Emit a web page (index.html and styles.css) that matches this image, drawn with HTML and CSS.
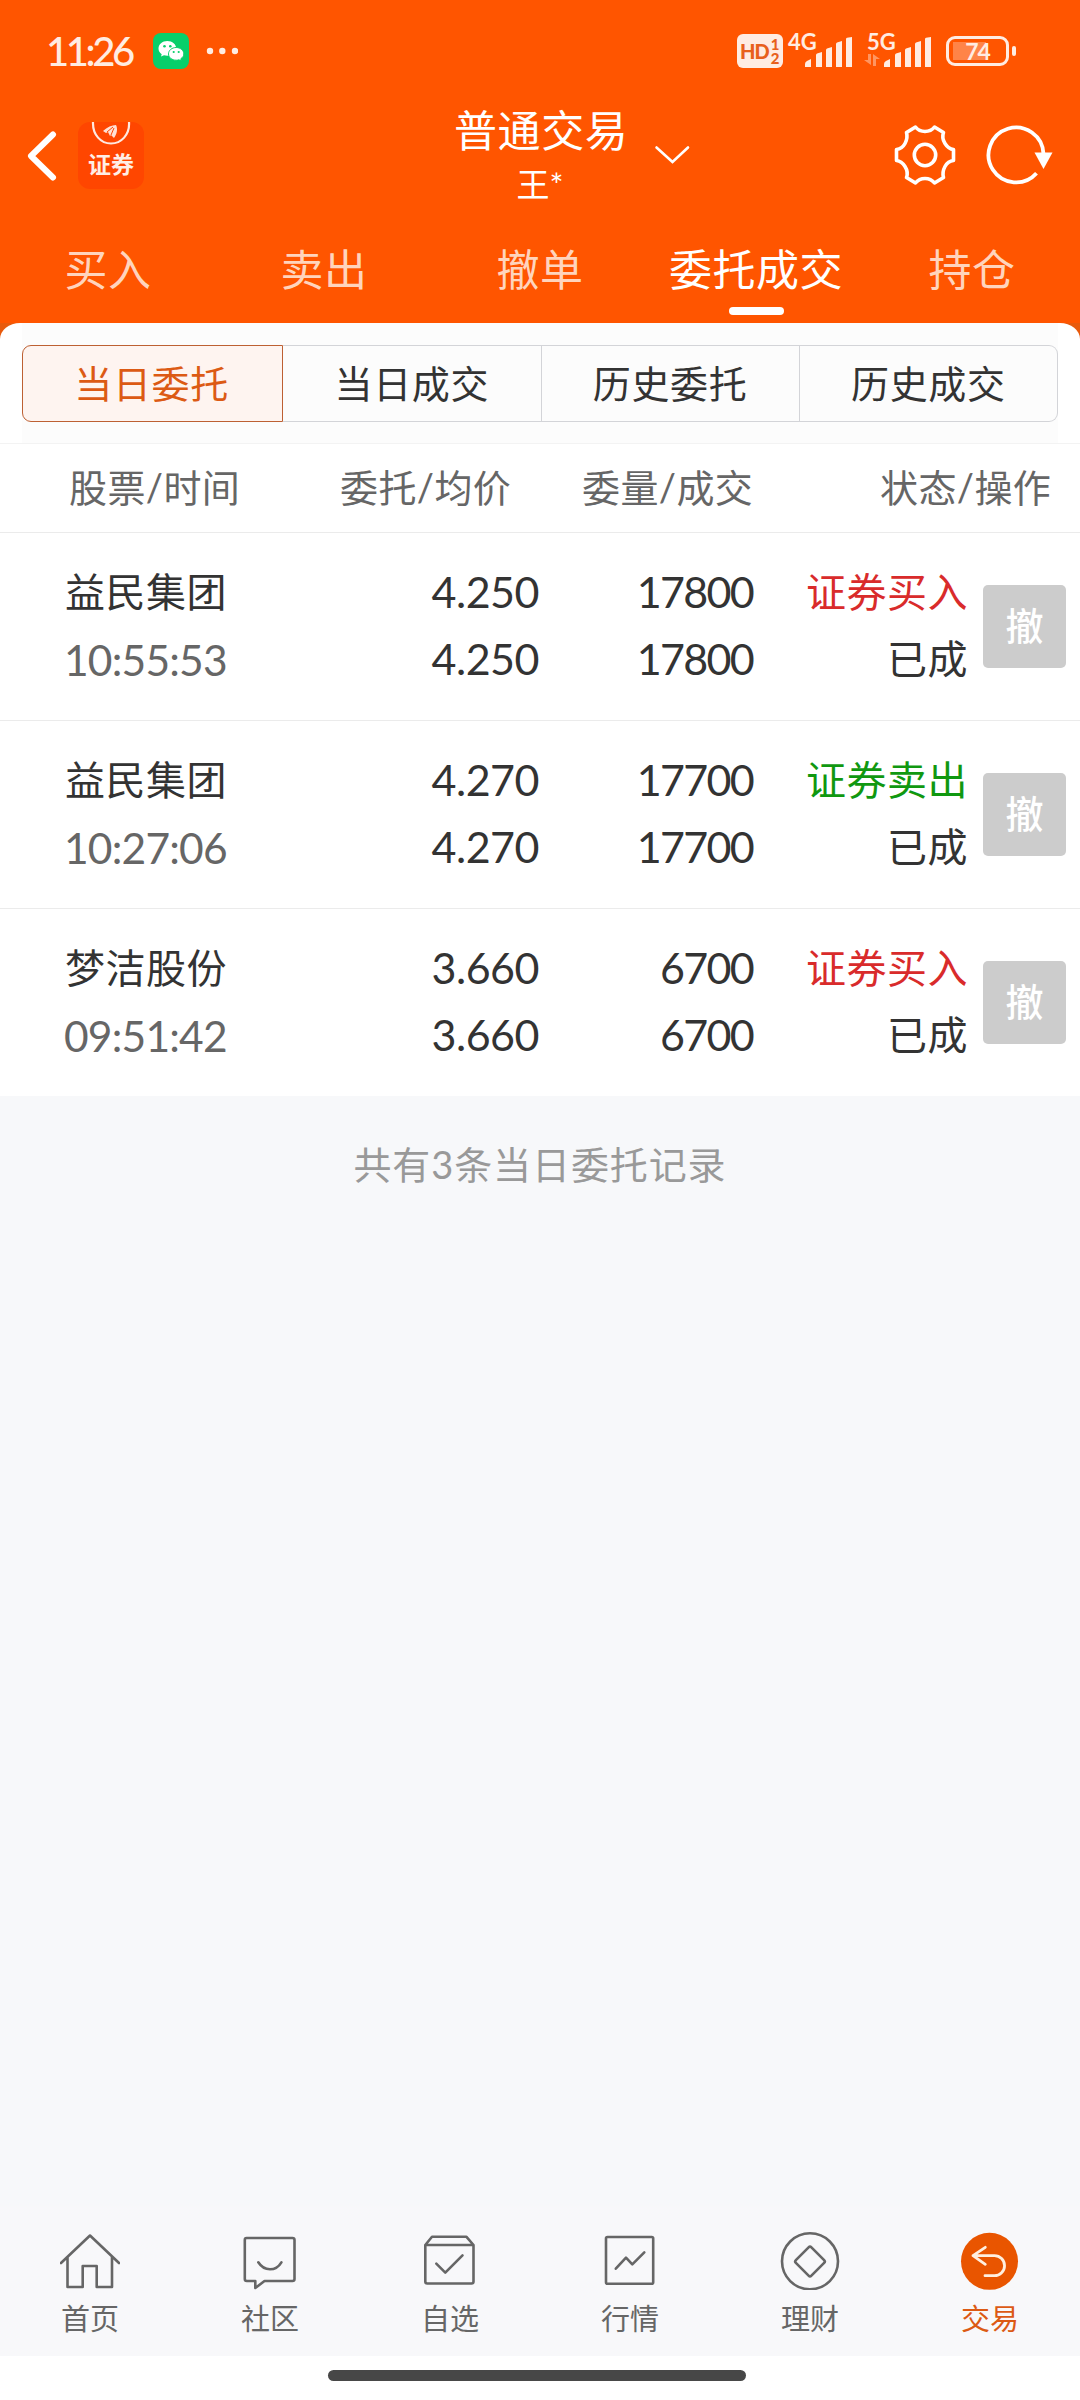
FILE: index.html
```html
<!DOCTYPE html>
<html lang="zh-CN">
<head>
    <meta charset="UTF-8">
    <meta name="viewport" content="width=device-width, initial-scale=1.0">
    <title>普通交易</title>
    <link rel="stylesheet" href="styles.css">
</head>
<body>
    <div class="app">
        <header class="top">
            <div class="status-bar">
                <span class="clock">11:26</span>
                <svg class="wechat" width="36" height="36" viewBox="0 0 36 36">
                    <rect width="36" height="36" rx="8" fill="#07cf6a"/>
                    <path d="M14.3 8C9.300 8 5.500 11.300 5.500 15.500c0 2.300 1.200 4.300 3.200 5.700L8 23.500l3-1.300c1 .3 2.200.5 3.300.5 5 0 9-3.200 9-7.200S19.300 8 14.300 8z" fill="#fff"/>
                    <path d="M23.200 14.500c-4.300 0-7.700 2.900-7.700 6.400s3.400 6.300 7.700 6.300c1 0 1.900-.1 2.700-.4l2.500 1.200-.6-2.200c1.800-1.200 3-2.900 3-4.900 0-3.500-3.400-6.400-7.600-6.400z" fill="#fff" stroke="#07cf6a"/>
                    <g fill="#07cf6a">
                        <circle cx="11.500" cy="13.200" r="1.300"/><circle cx="17.300" cy="13.200" r="1.300"/>
                        <circle cx="20.700" cy="19" r="1.100"/><circle cx="25.700" cy="19" r="1.100"/>
                    </g>
                </svg>
                <svg class="more" width="32" height="8" viewBox="0 0 32 8" fill="#ffece2">
                    <circle cx="4" cy="4" r="3.200"/><circle cx="16.300" cy="4" r="3.200"/><circle cx="29" cy="4" r="3.200"/>
                </svg>
                <div class="status-right">
                    <div class="hd">HD<span class="hd-sim"><i>1</i><i>2</i></span></div>
                    <div class="signal">
                        <span class="net">4G</span>
                        <svg class="bars" width="48" height="31" viewBox="0 0 48 31">
                            <path d="M0 30v-3q0-2 2-3l4-2v8zM11 30V18q0-1 1-1.500L17 15v15zM21 30V13q0-1 1-1.500l5-1.500v20zM31 30V7q0-1 1-1.500L37 4v26zM41 30V2q0-1 1-1.300L47 0v30z" fill="#ffece2"/>
                        </svg>
                    </div>
                    <div class="signal">
                        <span class="net">5G</span>
                        <svg class="data" width="16" height="12" viewBox="0 0 16 12" fill="#ff9560">
                            <path d="M4 0h3v11L0 6h4zM9 12V0l7 5h-4v7z"/>
                        </svg>
                        <svg class="bars" width="48" height="31" viewBox="0 0 48 31">
                            <path d="M0 30v-3q0-2 2-3l4-2v8zM11 30V18q0-1 1-1.500L17 15v15zM21 30V13q0-1 1-1.500l5-1.500v20zM31 30V7q0-1 1-1.500L37 4v26zM41 30V2q0-1 1-1.300L47 0v30z" fill="#ffece2"/>
                        </svg>
                    </div>
                    <div class="battery"><span>74</span></div>
                </div>
            </div>

            <div class="title-bar">
                <div class="title-left">
                    <svg width="30" height="52" viewBox="0 0 30 52" fill="none" stroke="#fff" stroke-width="6" stroke-linecap="round" stroke-linejoin="round">
                        <path d="M26 4.500L4 26l22 21.500"/>
                    </svg>
                    <div class="logo">
                        <svg width="66" height="28" viewBox="0 0 66 28" fill="none">
                            <path d="M15 0c-.5 13 8 21.500 18 21.500S52 13 51 0" stroke="#ffe9e0" stroke-width="2.200"/>
                            <path d="M25 9c4-4 9-6 13-6 2 4 1 9-2 13l-3-3-1 1-2-4-2 1z" fill="#ffe0d4"/>
                            <path d="M29 10l6-5M33 13l3-7" stroke="#ff4600"/>
                        </svg>
                        <span>证券</span>
                    </div>
                </div>
                <div class="title">
                    <h1>普通交易</h1>
                    <p>王*</p>
                </div>
                <svg class="chevron" width="36" height="20" viewBox="0 0 36 20" fill="none" stroke="#fff" stroke-width="2.600" stroke-linecap="round">
                    <path d="M2.500 2.500L18.500 17 34 2.500"/>
                </svg>
                <div class="title-right">
                    <svg width="62" height="62" viewBox="-31 -31 62 62" fill="none" stroke="#fff" stroke-width="3.600" stroke-linejoin="round">
                        <path d="M-9.500-28Q-6-23.500 0-23.500T9.500-28L18.500-22.500Q16.500-17 20-11.500T28.500-5.500V5.500Q23 6 20 11.500T18.500 22.500L9.500 28Q6 23.500 0 23.500T-9.500 28L-18.500 22.500Q-16.500 17-20 11.500T-28.500 5.500V-5.500Q-23-6-20-11.500T-18.500-22.500z"/>
                        <circle r="10.700"/>
                    </svg>
                    <svg width="68" height="62" viewBox="-31 -31 68 62">
                        <path d="M20.500 18.300A27.500 27.500 0 1 1 27.500-1" fill="none" stroke="#fff" stroke-width="3.800"/>
                        <path d="M18.500-2.500h18L27.500 14z" fill="#fff"/>
                    </svg>
                </div>
            </div>

            <nav class="tabs">
                <a>买入</a>
                <a>卖出</a>
                <a>撤单</a>
                <a class="active">委托成交</a>
                <a>持仓</a>
            </nav>
        </header>

        <main>
            <div class="sheet">
                <div class="segment-wrap">
                    <div class="segment">
                        <button class="active">当日委托</button>
                        <button>当日成交</button>
                        <button>历史委托</button>
                        <button>历史成交</button>
                    </div>
                </div>
            </div>

            <div class="list-head">
                <span>股票/时间</span>
                <span>委托/均价</span>
                <span>委量/成交</span>
                <span>状态/操作</span>
            </div>

            <div class="order">
                <div class="stock"><b>益民集团</b><time>10:55:53</time></div>
                <div class="num"><span>4.250</span><span>4.250</span></div>
                <div class="num qty"><span>17800</span><span>17800</span></div>
                <div class="state"><span class="buy">证券买入</span><span>已成</span></div>
                <button class="cancel">撤</button>
            </div>
            <div class="order">
                <div class="stock"><b>益民集团</b><time>10:27:06</time></div>
                <div class="num"><span>4.270</span><span>4.270</span></div>
                <div class="num qty"><span>17700</span><span>17700</span></div>
                <div class="state"><span class="sell">证券卖出</span><span>已成</span></div>
                <button class="cancel">撤</button>
            </div>
            <div class="order">
                <div class="stock"><b>梦洁股份</b><time>09:51:42</time></div>
                <div class="num"><span>3.660</span><span>3.660</span></div>
                <div class="num qty"><span>6700</span><span>6700</span></div>
                <div class="state"><span class="buy">证券买入</span><span>已成</span></div>
                <button class="cancel">撤</button>
            </div>

            <p class="total">共有3条当日委托记录</p>
        </main>

        <nav class="bottom-nav">
            <a>
                <svg viewBox="0 0 60 60"><path d="M1 33L30 5.500 59 33M7.500 27v30h15.200V36h14v21H52V27"/></svg>
                <span>首页</span>
            </a>
            <a>
                <svg viewBox="0 0 60 60"><path d="M6.500 8h46q2 0 2 2v39q0 2-2 2h-28l-9.200 7v-7H6.800q-2 0-2-2V10q0-2 1.700-2zM18.300 32.300q4.500 7 11.700 7t11.400-7"/></svg>
                <span>社区</span>
            </a>
            <a>
                <svg viewBox="0 0 60 60"><path d="M5.300 15h48.200v36.500q0 2-2 2H7.300q-2 0-2-2zl6.700-8.200h34.500l7 8.200M16.300 33.700l9 9 17.200-17.400"/></svg>
                <span>自选</span>
            </a>
            <a>
                <svg viewBox="0 0 60 60"><rect x="6" y="7" width="47.200" height="46.700" rx="1.500"/><path d="M15.800 38.700l10.200-11 6.300 6.600 12-12"/></svg>
                <span>行情</span>
            </a>
            <a>
                <svg viewBox="0 0 60 60"><circle cx="30" cy="31.300" r="28"/><rect x="19" y="20.500" width="22" height="22" rx="2" transform="rotate(45 30 31.500)"/></svg>
                <span>理财</span>
            </a>
            <a class="active">
                <svg viewBox="0 0 60 60"><circle class="disc" cx="29.500" cy="31.300" r="28.500"/><path d="M25.300 17.300l-12.300 8.300 12.300 8.700M13 25.600h21.500a10 10 0 0 1 0 20.100h-9.500"/></svg>
                <span>交易</span>
            </a>
        </nav>
        <div class="home-indicator"><i></i></div>
    </div>
</body>
</html>
```

FILE: styles.css
```css
* {
    box-sizing: border-box;
}
body {
    margin: 0;
    background: #f7f8fa;
    font-family: Lato, "Noto Sans CJK SC", sans-serif;
    color: #333;
}
button {
    font: inherit;
    color: inherit;
    padding: 0;
    border: none;
}
svg {
    display: block;
    flex: none;
}
i {
    font-style: normal;
}
.app {
    width: 1080px;
    height: 2400px;
    display: flex;
    flex-direction: column;
}

/* 顶部 */
.top {
    height: 323px;
    background: #ff5500;
    color: #fff;
}
.status-bar {
    height: 102px;
    padding: 0 64px 0 46px;
    display: flex;
    align-items: center;
    color: #ffece2;
}
.clock {
    width: 107px;
    font-size: 40px;
    font-weight: 500;
    letter-spacing: -3.4px;
}
.more {
    margin-left: 17px;
}
.status-right {
    margin-left: auto;
    display: flex;
    align-items: center;
}
.hd {
    width: 46px;
    height: 34px;
    margin-right: 5px;
    padding-left: 3px;
    display: flex;
    align-items: center;
    border-radius: 6px;
    background: #ffece2;
    color: #e8601c;
    font: 900 20px/34px Lato, sans-serif;
    letter-spacing: -1px;
}
.hd-sim {
    display: flex;
    flex-direction: column;
    margin-left: 2px;
    font-size: 15px;
    line-height: 14px;
}
.signal {
    position: relative;
    width: 65px;
    height: 34px;
    margin-right: 14px;
}
.net {
    position: absolute;
    left: 0;
    top: -2px;
    font-size: 22px;
    line-height: 20px;
    font-weight: 700;
}
.bars {
    position: absolute;
    right: 0;
    bottom: 0;
}
.data {
    position: absolute;
    left: -3px;
    bottom: 2px;
}
.battery {
    position: relative;
    width: 63px;
    height: 30px;
    border: 3px solid #ffece2;
    border-radius: 9px;
    margin: 0 7px 0 0;
    font: 700 23px/24px Lato, sans-serif;
    text-align: center;
    letter-spacing: -1px;
    background: linear-gradient(#ff8448, #ff8448) 4px 3px / 33px 18px no-repeat;
}
.battery::after {
    content: "";
    position: absolute;
    right: -10px;
    top: 7px;
    width: 4px;
    height: 10px;
    border-radius: 2px;
    background: #ffece2;
}
.title-bar {
    height: 114px;
    padding: 0 27px;
    display: grid;
    grid-template-columns: 1fr 172px 1fr;
    position: relative;
}
.title-left {
    display: flex;
    align-items: center;
    gap: 21px;
    height: 107px;
}
.logo {
    width: 66px;
    height: 67px;
    border-radius: 12px;
    background: #ff4600;
    text-align: center;
    overflow: hidden;
}
.logo span {
    display: block;
    font-size: 23px;
    line-height: 28px;
    font-weight: 700;
    color: #ffeee6;
}
.title {
    text-align: center;
    white-space: nowrap;
}
.title h1 {
    margin: 0;
    font-size: 43px;
    line-height: 58px;
    font-weight: 400;
    letter-spacing: 0.6px;
}
.title p {
    margin: 0;
    font-size: 33px;
    line-height: 48px;
}
.chevron {
    position: absolute;
    left: 654px;
    top: 43px;
}
.title-right {
    display: flex;
    justify-content: flex-end;
    align-items: center;
    height: 106px;
    gap: 29px;
}
.tabs {
    display: grid;
    grid-template-columns: repeat(5, 216px);
    text-align: center;
}
.tabs a {
    position: relative;
    height: 107px;
    font-size: 43px;
    line-height: 107px;
    letter-spacing: 0.5px;
    color: #ffd4bd;
}
.tabs .active {
    color: #fff;
}
.tabs .active::after {
    content: "";
    position: absolute;
    left: 81px;
    bottom: 8px;
    width: 55px;
    height: 8px;
    border-radius: 4px;
    background: #fff;
}

/* 委托列表 */
main {
    flex: 1;
    background: #f7f8fa;
}
.sheet {
    background: linear-gradient(#e85a0c 20px, #fff 20px);
}
.segment-wrap {
    padding: 0 22px;
    border-radius: 20px 20px 0 0 / 16px 16px 0 0;
    background: #fff;
}
.segment {
    display: flex;
    height: 120px;
    padding: 22px 0 21px;
    background: #fcfcfc;
}
.segment button {
    flex: 1;
    padding-bottom: 4px;
    border: 1px solid #d3d4d8;
    border-left-width: 0;
    background: #fcfcfc;
    font-size: 38px;
    letter-spacing: 0.7px;
}
.segment button:last-child {
    border-radius: 0 9px 9px 0;
}
.segment .active {
    padding-right: 2px;
    border: 1px solid #bd6033;
    border-radius: 9px 0 0 9px;
    background: #fef4f0;
    color: #dc5a14;
}
.list-head {
    height: 90px;
    padding-left: 69px;
    display: grid;
    grid-template-columns: 271px 242px 298px 1fr;
    border-top: 1px solid #f3f3f3;
    border-bottom: 1px solid #ebebeb;
    background: #fff;
    font-size: 38px;
    line-height: 86px;
    letter-spacing: 0.4px;
    color: #666;
}
.order {
    height: 188px;
    padding-left: 65px;
    display: grid;
    grid-template-columns: 258px 216px 216px 213px 83px;
    align-items: center;
    border-bottom: 1px solid #ebebeb;
    background: #fff;
    font-size: 40px;
    line-height: 67px;
    letter-spacing: 0.5px;
}
.order:nth-child(5) {
    border-bottom: none;
    height: 187px;
}
.order > div {
    display: flex;
    flex-direction: column;
    padding-bottom: 2px;
}
.stock b {
    font-weight: 400;
}
.stock time {
    margin-left: -1px;
    color: #666;
    font-size: 42.5px;
    letter-spacing: -0.8px;
}
.order .num {
    padding-bottom: 4px;
    text-align: right;
    font-size: 43px;
    letter-spacing: -0.5px;
}
.order .qty {
    padding-right: 2px;
    letter-spacing: -1.7px;
}
.state {
    text-align: right;
}
.buy {
    color: #d92b2b;
}
.sell {
    color: #109810;
}
.cancel {
    margin-left: 15px;
    padding-bottom: 3px;
    width: 83px;
    height: 83px;
    border-radius: 5px;
    background: #ccc;
    color: #fff;
    font-size: 38px;
    font-weight: 500;
}
.total {
    margin: 0;
    text-align: center;
    font-size: 38px;
    line-height: 136px;
    letter-spacing: 0.9px;
    color: #999;
}

/* 底部导航 */
.bottom-nav {
    height: 150px;
    padding-top: 24px;
    display: grid;
    grid-template-columns: repeat(6, 180px);
    background: #f8f8fa;
}
.bottom-nav a {
    display: flex;
    flex-direction: column;
    align-items: center;
    color: #666;
    font-size: 29px;
    line-height: 58px;
}
.bottom-nav svg {
    width: 60px;
    height: 60px;
    fill: none;
    stroke: #666;
    stroke-width: 2.6;
    stroke-linecap: round;
    stroke-linejoin: round;
}
.bottom-nav .active {
    color: #dc5a14;
}
.bottom-nav .active svg {
    stroke: #fff0e0;
    stroke-width: 2.8;
}
.bottom-nav .disc {
    fill: #e95500;
    stroke: none;
}
.home-indicator {
    height: 44px;
    padding-top: 14px;
    background: #fff;
}
.home-indicator i {
    display: block;
    width: 418px;
    height: 11px;
    margin-left: 328px;
    border-radius: 6px;
    background: #474747;
}
```
